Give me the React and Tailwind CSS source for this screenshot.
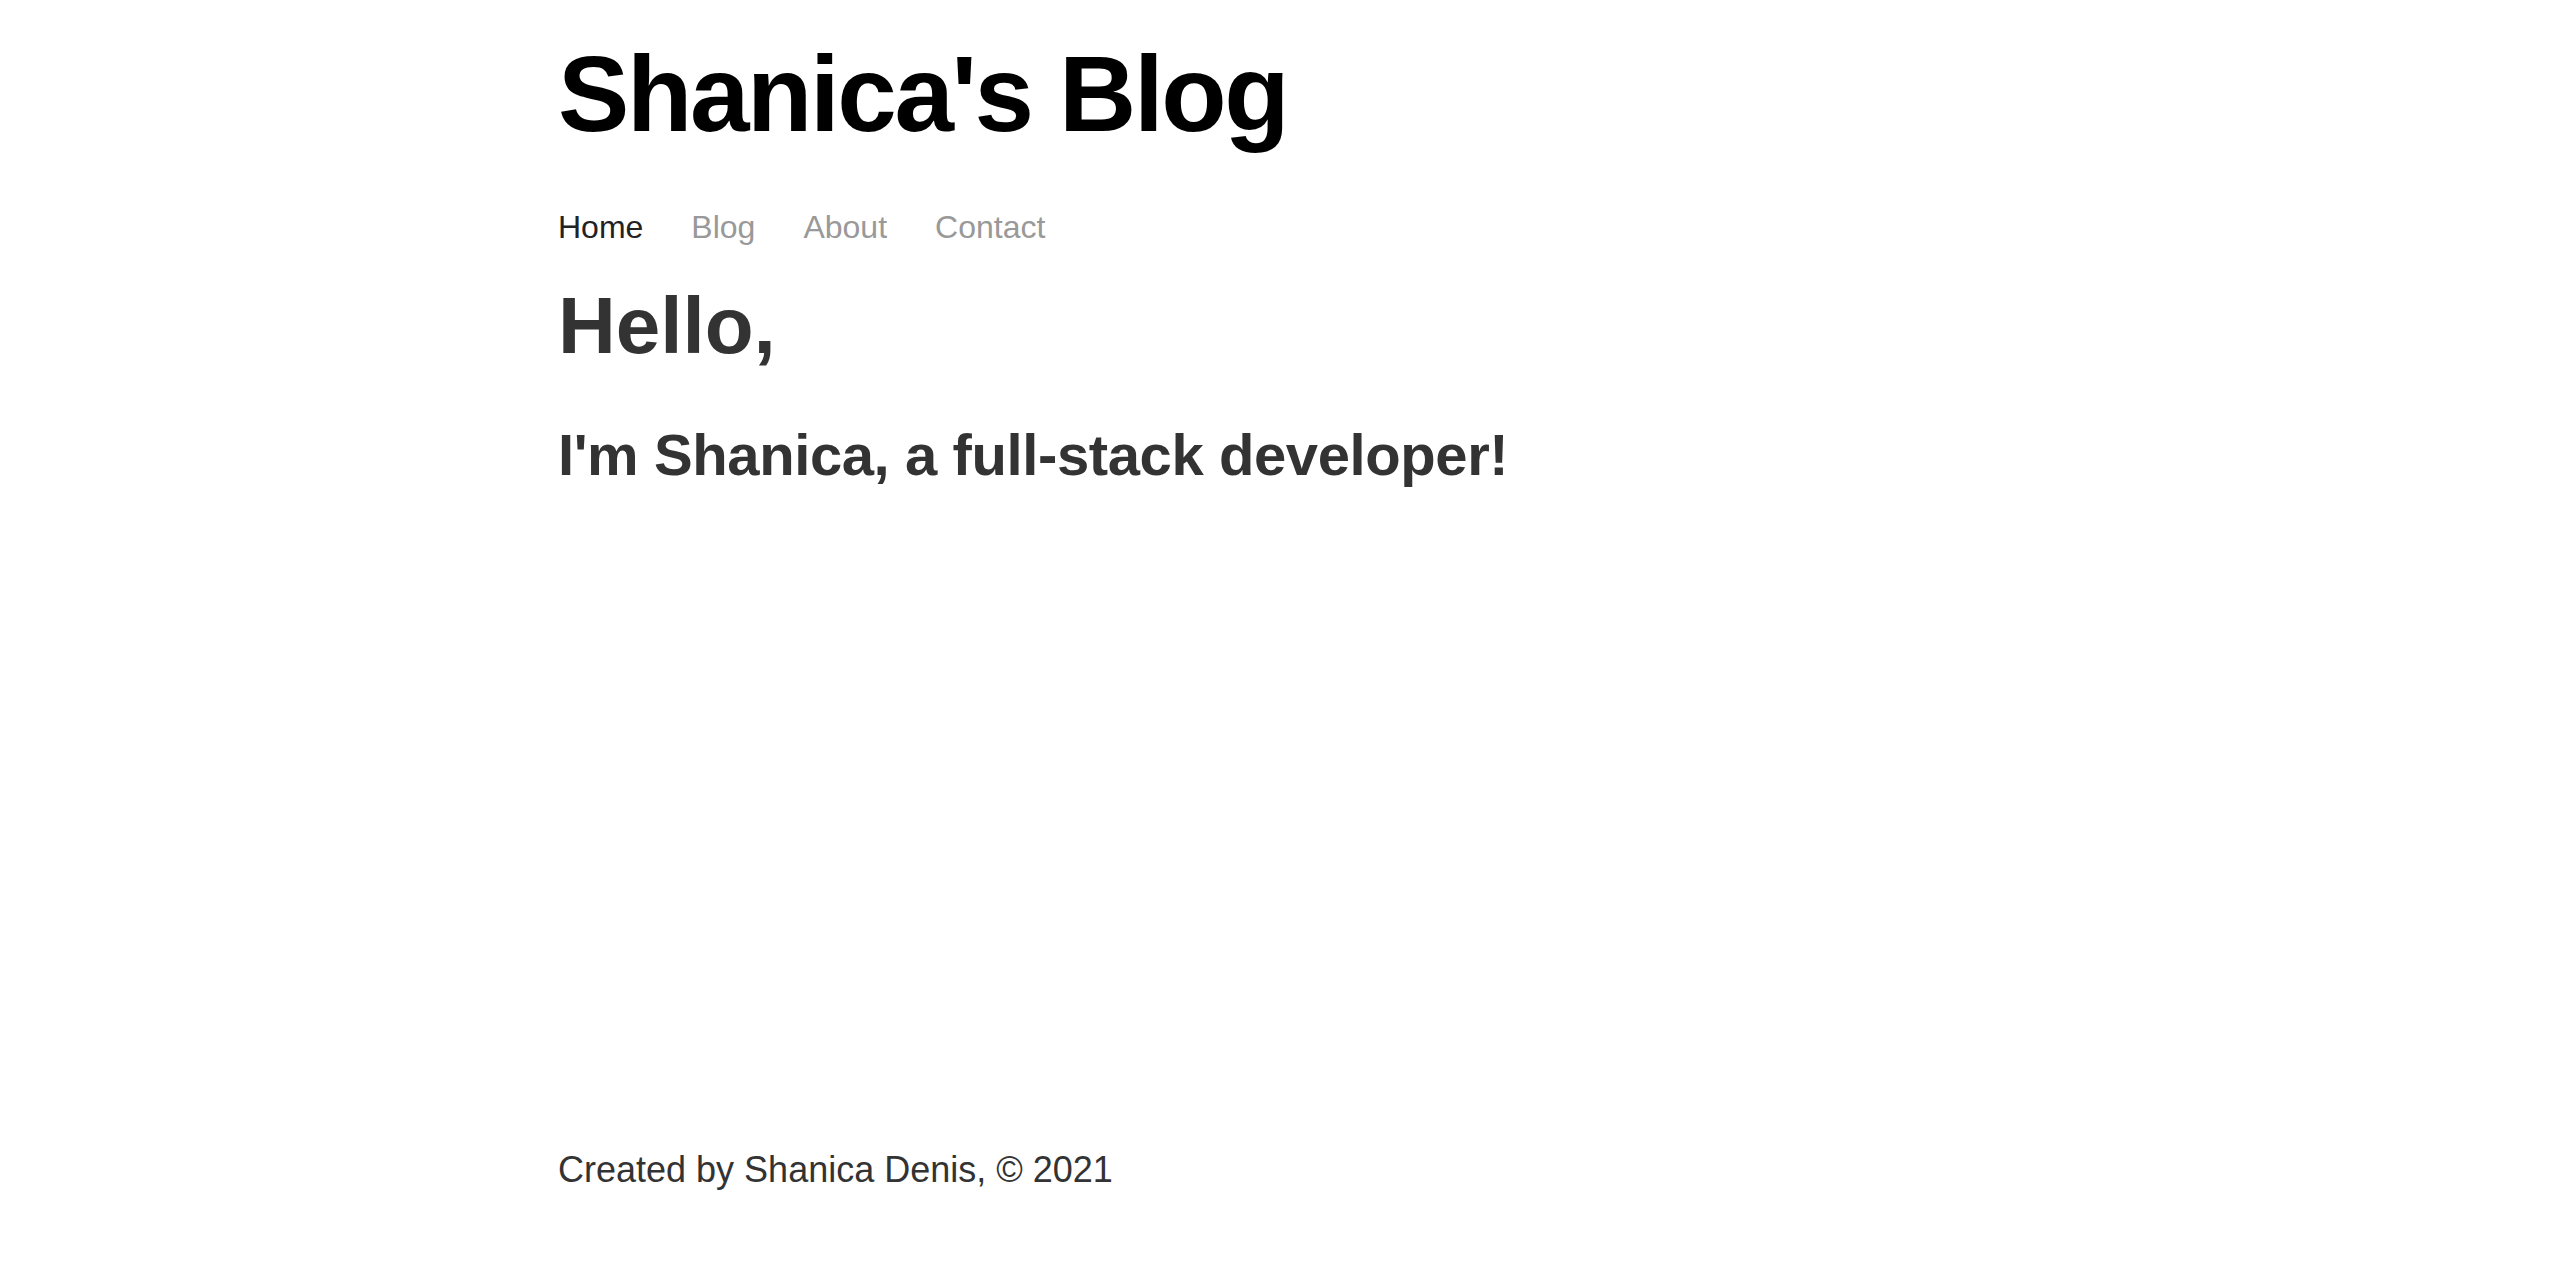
export default function App() {
  const links = ['Home', 'Blog', 'About', 'Contact']

  return (
    <div className="min-h-screen bg-white font-['Liberation_Sans',Arial,sans-serif]">
      <div className="mx-auto flex min-h-screen w-[1436px] flex-col pt-[41px]">
        <header>
          <h1 className="text-[107px] font-bold leading-[107px] tracking-[-2.4px] text-black">
            Shanica's Blog
          </h1>
          <nav className="mt-[55px] flex gap-12 text-[32px] leading-[48px]">
            {links.map((link, i) => (
              <a
                key={link}
                href="#"
                className={i === 0 ? 'text-[#222]' : 'text-[#999]'}
              >
                {link}
              </a>
            ))}
          </nav>
        </header>

        <main className="text-[#333]">
          <h2 className="mt-[27px] text-[80px] font-bold leading-[96px]">Hello,</h2>
          <h3 className="mt-[46px] text-[58px] font-bold leading-[70px] tracking-[-0.4px]">
            I'm Shanica, a full-stack developer!
          </h3>
        </main>

        <footer className="mt-auto pb-[93px] text-[36px] leading-[44px] text-[#333]">
          Created by Shanica Denis, © 2021
        </footer>
      </div>
    </div>
  )
}
